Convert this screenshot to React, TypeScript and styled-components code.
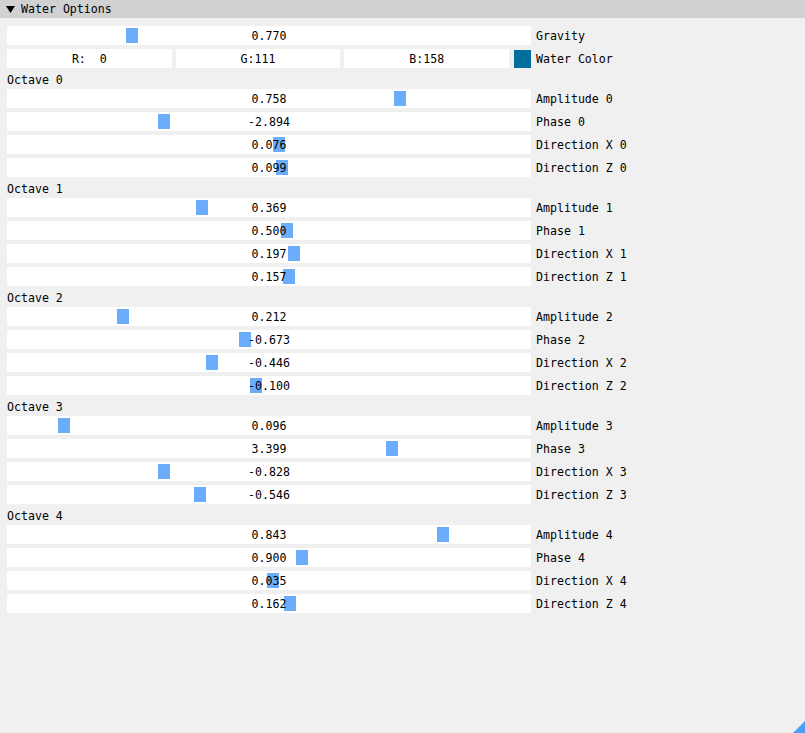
import React from "react";
import styled, { createGlobalStyle } from "styled-components";

const Global = createGlobalStyle`
  html, body { margin: 0; padding: 0; }
  body {
    background: #f0f0f0;
    font-family: "DejaVu Sans Mono", "Liberation Mono", monospace;
    font-size: 11.6px;
    color: #000;
  }
`;

const Window = styled.div`
  position: relative;
  width: 805px;
  height: 733px;
  background: #f0f0f0;
  overflow: hidden;
`;

const TitleBar = styled.div`
  height: 18px;
  background: #d1d1d1;
  display: flex;
  align-items: center;
  padding-left: 6px;
  gap: 6px;
  line-height: 13px;
`;

const TitleText = styled.span`
  padding-top: 1px;
`;

const Content = styled.div`
  padding: 8px 0 0 7px;
  display: flex;
  flex-direction: column;
  gap: 4px;
`;

const Row = styled.div`
  display: flex;
  align-items: center;
  height: 19px;
  gap: 5px;
`;

const Frame = styled.div`
  position: relative;
  box-sizing: border-box;
  width: 524px;
  height: 19px;
  padding-top: 2px;
  background: #ffffff;
  display: flex;
  align-items: center;
  justify-content: center;
  line-height: 13px;
  white-space: pre;
`;

const Grab = styled.div`
  position: absolute;
  top: 2px;
  bottom: 2px;
  width: 12px;
  background: #6cadfb;
`;

const ValueText = styled.span`
  position: relative;
  z-index: 1;
`;

const Label = styled.span`
  line-height: 13px;
  padding-top: 2px;
  white-space: pre;
`;

const SectionLabel = styled.div`
  box-sizing: border-box;
  height: 13px;
  padding-top: 2px;
  line-height: 13px;
  white-space: pre;
`;

const ColorFields = styled.div`
  display: flex;
  gap: 4px;
  width: 524px;
  height: 19px;
  align-items: center;
`;

const ColorField = styled.div`
  flex: 1;
  box-sizing: border-box;
  height: 19px;
  padding-top: 2px;
  background: #ffffff;
  display: flex;
  align-items: center;
  justify-content: center;
  white-space: pre;
  line-height: 13px;
`;

const Swatch = styled.div<{ $color: string }>`
  width: 17px;
  height: 18px;
  margin-left: 1px;
  background: ${(p) => p.$color};
`;

const ResizeGrip = styled.div`
  position: absolute;
  right: 0;
  bottom: 0;
  width: 12px;
  height: 12px;
  background: #4d9cf9;
  clip-path: polygon(100% 0, 100% 100%, 0 100%);
`;

type SliderProps = { value: number; t: number; label: string };

const Slider: React.FC<SliderProps> = ({ value, t, label }) => (
  <Row>
    <Frame>
      <Grab style={{ left: `${Math.round(2 + t * 508)}px` }} />
      <ValueText>{value.toFixed(3)}</ValueText>
    </Frame>
    <Label>{label}</Label>
  </Row>
);

const octaves = [
  { amp: 0.758, phase: -2.894, dx: 0.076, dz: 0.099 },
  { amp: 0.369, phase: 0.5, dx: 0.197, dz: 0.157 },
  { amp: 0.212, phase: -0.673, dx: -0.446, dz: -0.1 },
  { amp: 0.096, phase: 3.399, dx: -0.828, dz: -0.546 },
  { amp: 0.843, phase: 0.9, dx: 0.035, dz: 0.162 },
];

const phaseT = (v: number) => (v + 7) / 14;
const dirT = (v: number) => (v + 2) / 4;

export default function App() {
  return (
    <Window>
      <Global />
      <TitleBar>
        <svg width="9" height="7" viewBox="0 0 9 7">
          <polygon points="0,0 9,0 4.5,7" fill="#000" />
        </svg>
        <TitleText>Water Options</TitleText>
      </TitleBar>
      <Content>
        <Slider value={0.77} t={0.2303} label="Gravity" />
        <Row>
          <ColorFields>
            <ColorField>{"R:  0"}</ColorField>
            <ColorField>G:111</ColorField>
            <ColorField>B:158</ColorField>
            <Swatch $color="#006f9e" />
          </ColorFields>
          <Label>Water Color</Label>
        </Row>
        {octaves.map((o, i) => (
          <React.Fragment key={i}>
            <SectionLabel>{`Octave ${i}`}</SectionLabel>
            <Slider value={o.amp} t={o.amp} label={`Amplitude ${i}`} />
            <Slider value={o.phase} t={phaseT(o.phase)} label={`Phase ${i}`} />
            <Slider value={o.dx} t={dirT(o.dx)} label={`Direction X ${i}`} />
            <Slider value={o.dz} t={dirT(o.dz)} label={`Direction Z ${i}`} />
          </React.Fragment>
        ))}
      </Content>
      <ResizeGrip />
    </Window>
  );
}
